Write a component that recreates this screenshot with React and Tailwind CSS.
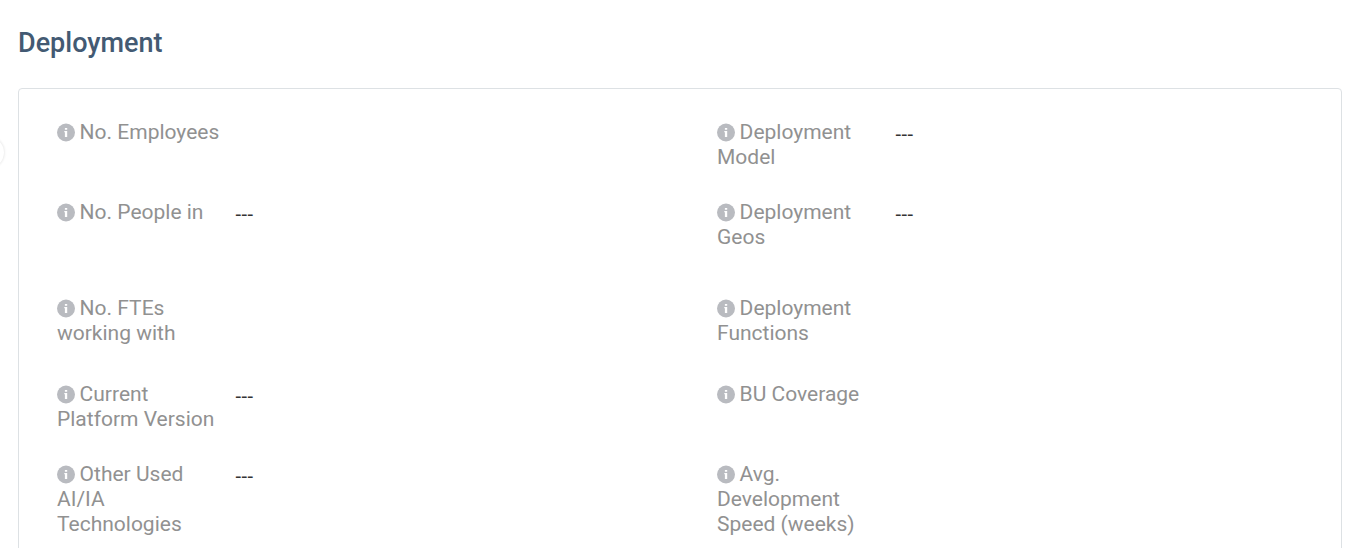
const ROWS = [
  {
    height: "h-20",
    left: { label: ["No. Employees"] },
    right: { label: ["Deployment", "Model"], value: "---" },
  },
  {
    height: "h-24",
    left: { label: ["No. People in"], value: "---" },
    right: { label: ["Deployment", "Geos"], value: "---" },
  },
  {
    height: "h-[86px]",
    left: { label: ["No. FTEs", "working with"] },
    right: { label: ["Deployment", "Functions"] },
  },
  {
    height: "h-20",
    left: { label: ["Current", "Platform Version"], value: "---" },
    right: { label: ["BU Coverage"] },
  },
  {
    height: "h-24",
    left: { label: ["Other Used", "AI/IA", "Technologies"], value: "---" },
    right: { label: ["Avg.", "Development", "Speed (weeks)"] },
  },
];

function InfoIcon() {
  return (
    <svg width="18" height="19" viewBox="0 0 18 19" className="mr-[4.6px] shrink-0">
      <circle cx="9" cy="9.5" r="9" fill="#b9bbc0" />
      <path d="M7.9 4.9h2.3v1.9H7.9zM7.3 8h2.9v6H7.9V9.3h-.6z" fill="#fff" />
    </svg>
  );
}

function Field({ label, value }) {
  return (
    <div className="flex w-[660px] shrink-0">
      <div className="w-[178px] shrink-0 whitespace-nowrap text-[#919191]">
        {label.map((line, i) => (
          <div key={line} className="flex items-center">
            {i === 0 && <InfoIcon />}
            <span>{line}</span>
          </div>
        ))}
      </div>
      {value && <div className="pt-0.5 pl-[0.5px] text-[20px] tracking-[0.5px] text-[#333]">{value}</div>}
    </div>
  );
}

export default function App() {
  return (
    <div className="relative h-[548px] overflow-hidden bg-white pl-[18px] font-[Roboto,sans-serif]">
      <h2 className="pt-[25px] text-[27px] leading-9 font-medium text-[#435a73]">Deployment</h2>
      <div className="mt-[27px] h-[520px] w-[1324px] rounded-[4px] border border-[#dde1e4] pt-[31px] pl-[38px] text-[21px] leading-[25px]">
        {ROWS.map((row) => (
          <div key={row.left.label[0]} className={`flex ${row.height}`}>
            <Field {...row.left} />
            <Field {...row.right} />
          </div>
        ))}
      </div>
      <div className="absolute top-[137px] -left-[27px] size-[31px] rounded-full bg-white shadow-[0_0_3px_rgba(0,0,0,0.15)]" />
    </div>
  );
}
